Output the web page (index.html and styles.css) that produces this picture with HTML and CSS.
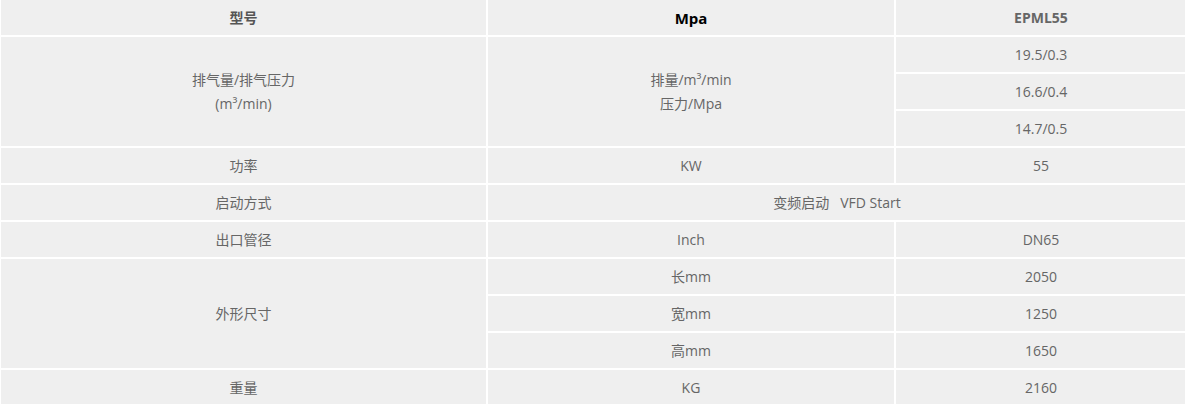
FILE: index.html
```html
<!DOCTYPE html>
<html lang="zh-CN">
<head>
<meta charset="utf-8">
<title>EPML55</title>
<link rel="stylesheet" href="styles.css">
</head>
<body>
<table class="spec">
  <colgroup>
    <col class="c1">
    <col class="c2">
    <col class="c3">
  </colgroup>
  <tr class="head">
    <td class="h-label">型号</td>
    <td class="h-unit">Mpa</td>
    <td class="h-model">EPML55</td>
  </tr>
  <tr>
    <td rowspan="3" class="two">排气量/排气压力<br>(m³/min)</td>
    <td rowspan="3" class="two">排量/m³/min<br>压力/Mpa</td>
    <td>19.5/0.3</td>
  </tr>
  <tr><td>16.6/0.4</td></tr>
  <tr><td>14.7/0.5</td></tr>
  <tr>
    <td>功率</td>
    <td>KW</td>
    <td>55</td>
  </tr>
  <tr>
    <td>启动方式</td>
    <td colspan="2">变频启动&nbsp;&nbsp; VFD Start</td>
  </tr>
  <tr>
    <td>出口管径</td>
    <td>Inch</td>
    <td>DN65</td>
  </tr>
  <tr>
    <td rowspan="3">外形尺寸</td>
    <td>长mm</td>
    <td>2050</td>
  </tr>
  <tr><td>宽mm</td><td>1250</td></tr>
  <tr><td>高mm</td><td>1650</td></tr>
  <tr>
    <td>重量</td>
    <td>KG</td>
    <td>2160</td>
  </tr>
</table>
</body>
</html>
```

FILE: styles.css
```css
html, body {
  margin: 0;
  padding: 0;
  background: #ffffff;
  overflow: hidden;
}

.spec {
  margin: -2px 0 0 -1px;
  border-collapse: separate;
  border-spacing: 2px;
  table-layout: fixed;
  width: 1189px;
  background: #ffffff;
  font-family: "Open Sans", "Noto Sans CJK SC", sans-serif;
  font-size: 14px;
  color: #666666;
}

.c1 { width: 485px; }
.c2 { width: 406px; }
.c3 { width: 290px; }

.spec td {
  background: #efefef;
  height: 35px;
  padding: 0;
  text-align: center;
  vertical-align: middle;
  line-height: 16px;
}

.spec td.two {
  line-height: 24px;
}

.h-label {
  font-weight: 700;
  color: #555555;
}

.h-unit {
  font-weight: 700;
  color: #000000;
  font-size: 15px;
}

.h-model {
  font-weight: 700;
  color: #666666;
}
```
